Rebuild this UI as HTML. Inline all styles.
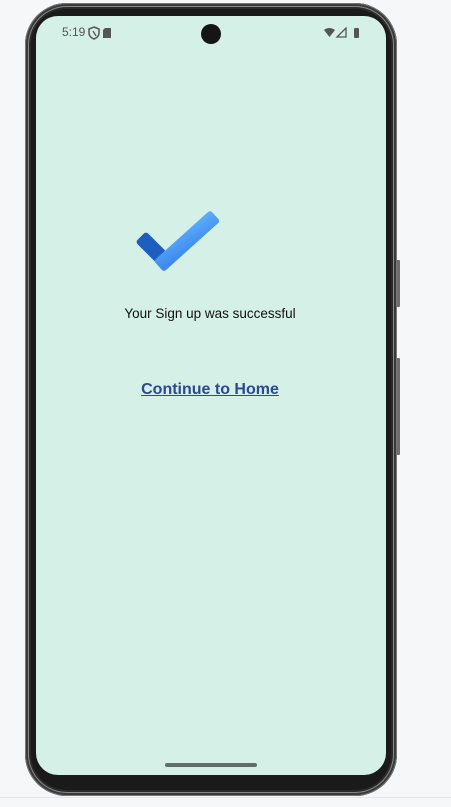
<!DOCTYPE html>
<html><head><meta charset="utf-8"><style>
html,body{margin:0;padding:0;width:451px;height:807px;background:#f6f7f9;overflow:hidden;font-family:"Liberation Sans",Roboto,sans-serif}
.line{position:absolute;left:0;right:0;top:797px;height:1px;background:#e6e7ea}
.frame{position:absolute;left:25px;top:3px;width:372px;height:793px;border-radius:42px;background:#1a1a1a;box-shadow:inset 0 0 0 1px #777,inset 0 0 0 3px #3a3a3a,inset 0 0 0 4px #888,inset 0 0 0 6px #2a2a2a}
.screen{position:absolute;left:36px;top:16px;width:350px;height:759px;border-radius:22px;background:#d5f0e6;overflow:hidden}
.btn{position:absolute;left:396px;width:4px;background:#6e6e6e;border-radius:1px}
.cam{position:absolute;left:201px;top:24px;width:20px;height:20px;border-radius:50%;background:#151515}
.time{position:absolute;left:62px;top:25px;font-size:12px;color:#555}
.msg{position:absolute;left:0;width:420px;top:306px;text-align:center;font-size:13.5px;color:#111}
.link{position:absolute;left:0;width:420px;top:381px;text-align:center;font-size:16px;font-weight:bold;color:#2b4a8f;text-decoration:underline}
.bar{position:absolute;left:165px;top:763px;width:92px;height:4px;border-radius:2px;background:#5f6e68}
</style></head><body>
<div class="line"></div>
<div class="btn" style="top:260px;height:47px"></div>
<div class="btn" style="top:358px;height:97px"></div>
<div class="frame"></div>
<div class="screen"></div>
<div class="cam"></div>
<div class="time">5:19</div>
<svg style="position:absolute;left:88px;top:26px" width="24" height="14" viewBox="0 0 24 14">
<path d="M6 1 L11 3 V7 C11 10 8.5 12 6 13 C3.5 12 1 10 1 7 V3 Z" fill="none" stroke="#555" stroke-width="1.5"/>
<path d="M5 5 L8 10" stroke="#555" stroke-width="1.3"/>
<path d="M17 2 H23 V12 H15 V4 Z" fill="#555"/>
</svg>
<svg style="position:absolute;left:324px;top:27px" width="40" height="12" viewBox="0 0 40 12">
<path d="M0 3 Q5 -1 11 3 L5.5 10 Z" fill="#555"/>
<path d="M22 1 V10 H13 Z" fill="none" stroke="#555" stroke-width="1.3"/>
<rect x="30" y="1" width="5" height="10" rx="1" fill="#555"/>
</svg>
<svg style="position:absolute;left:0;top:0" width="451" height="807" viewBox="0 0 451 807">
<defs><linearGradient id="g" x1="0" y1="1" x2="1" y2="0"><stop offset="0" stop-color="#3a84ec"/><stop offset="1" stop-color="#5eaefc"/></linearGradient></defs>
<rect x="-16" y="-7.5" width="32" height="15" rx="3" fill="#1e5ec0" transform="translate(152,248) rotate(45)"/>
<rect x="-38" y="-7.5" width="76" height="15" rx="3" fill="url(#g)" transform="translate(187,241) rotate(-42)"/>
</svg>
<div class="msg">Your Sign up was successful</div>
<div class="link">Continue to Home</div>
<div class="bar"></div>
</body></html>
